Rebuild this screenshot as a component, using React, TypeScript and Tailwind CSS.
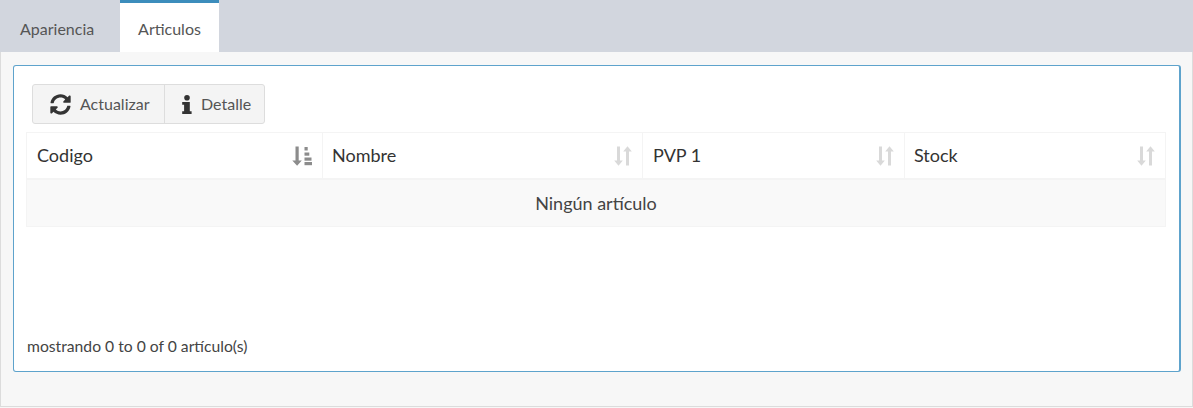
import { FaSyncAlt } from "react-icons/fa";

function InfoGlyph() {
  return (
    <svg width="12" height="19" viewBox="0 0 12 19" className="text-[#333]" fill="currentColor">
      <circle cx="6" cy="2.800" r="2.800" />
      <path d="M1.200 7h7.600v9.200h1.800V19H1.200v-2.800h1.900v-6.400H1.200z" />
    </svg>
  );
}

function SortIcon({ active }: { active?: boolean }) {
  if (active) {
    return (
      <svg width="20" height="20" viewBox="0 0 20 20" className="text-[#8c8c8c]" fill="currentColor">
        <path d="M3.500 0.500h3.200v14h3.100L5.100 19.800 0.300 14.500h3.200z" />
        <rect x="12.500" y="1" width="3.200" height="3.500" />
        <rect x="12.500" y="6.500" width="4.800" height="3.200" />
        <rect x="12.500" y="11.500" width="7" height="3.200" />
        <rect x="12.500" y="16" width="7.500" height="3.200" />
      </svg>
    );
  }
  return (
    <svg width="18" height="20" viewBox="0 0 18 20" className="text-[#d9d9d9]" fill="currentColor">
      <path d="M3 0.500h3v14h2.800L4.500 19.800 0.200 14.500H3z" />
      <path d="M12 19.500h3v-14h2.800L13.500 0.200 9.200 5.500H12z" />
    </svg>
  );
}

function Th({ label, width, active, last, tight }: { label: string; width: string; active?: boolean; last?: boolean; tight?: boolean }) {
  return (
    <div className={`${width} flex items-center justify-between ${tight ? "pl-[9px]" : "pl-[10px]"} pr-[10px] ${last ? "" : "border-r border-[#f4f4f4]"}`}>
      <span className="text-[18px] text-[#333]">{label}</span>
      <SortIcon active={active} />
    </div>
  );
}

export default function App() {
  return (
    <div className="h-[408px] w-[1193px] overflow-hidden bg-[#f7f7f7] font-['Lato','Open_Sans',sans-serif] text-[#444]">
      <div className="flex h-[52px] bg-[#d2d6de] pl-px">
        <div className="flex w-[119px] items-center pl-[19px] pt-[6px] text-[16px] text-[#555]">Apariencia</div>
        <div className="flex h-[52px] w-[99px] items-center justify-center border-t-[3px] border-[#3c8dbc] bg-white pt-[3px] text-[16px] text-[#555]">
          Articulos
        </div>
      </div>
      <div className="h-[355px] border-x border-b border-[#dcdcdc] px-3 pt-[13px]">
        <div className="h-[307px] w-[1168px] rounded-[3px] border border-r-2 border-[#5ea3cc] bg-white pl-3 pt-[18px]">
          <div className="ml-[6px] flex h-[40px] w-[233px] rounded-[3px] border border-[#dddddd] bg-[#f4f4f4]">
            <div className="flex w-[132px] items-center gap-[9px] border-r border-[#dddddd] pl-[17px] text-[16px] text-[#555]">
              <FaSyncAlt className="text-[21px] text-[#333]" />
              <span>Actualizar</span>
            </div>
            <div className="flex flex-1 items-center gap-[8px] pl-[16px] text-[16px] text-[#555]">
              <InfoGlyph />
              <span>Detalle</span>
            </div>
          </div>
          <div className="mt-[8px] w-[1140px] border border-[#f4f4f4]">
            <div className="flex h-[47px] border-b-2 border-[#f4f4f4]">
              <Th label="Codigo" width="w-[296px]" active />
              <Th label="Nombre" width="w-[320px]" tight />
              <Th label="PVP 1" width="w-[262px]" />
              <Th label="Stock" width="flex-1" last tight />
            </div>
            <div className="flex h-[46px] items-center justify-center bg-[#f9f9f9] pt-[1px] text-[18px] text-[#444]">Ningún artículo</div>
          </div>
          <div className="ml-px mt-[108px] text-[15.700px] text-[#444]">mostrando 0 to 0 of 0 artículo(s)</div>
        </div>
      </div>
    </div>
  );
}
